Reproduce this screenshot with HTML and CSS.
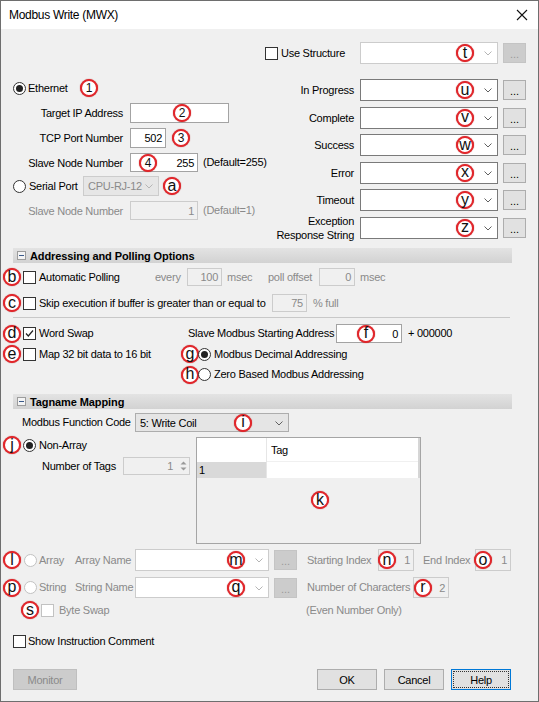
FILE: index.html
```html
<!DOCTYPE html>
<html>
<head>
<meta charset="utf-8">
<title>Modbus Write (MWX)</title>
<link rel="stylesheet" href="styles.css">
</head>
<body>
<div class="window">
  <div class="titlebar">
    <span class="title">Modbus Write (MWX)</span>
    <svg class="close" width="12" height="12" viewBox="0 0 12 12"><path d="M1 1L11 11M11 1L1 11" stroke="#111" stroke-width="1.1" fill="none"/></svg>
  </div>

  <div class="content">
    <div class="top">
      <div class="left">
        <div class="row eth">
          <span class="rd on"></span><span class="lbl w-eth">Ethernet</span><span class="badge num">1</span>
        </div>
        <div class="row h20 mt6">
          <span class="flabel">Target IP Address</span>
          <span class="tbox w99"><span class="badge num ov b-ip">2</span></span>
        </div>
        <div class="row h20 mt5">
          <span class="flabel">TCP Port Number</span>
          <span class="tbox w36">502</span><span class="badge num ml6">3</span>
        </div>
        <div class="row h19 mt5">
          <span class="flabel">Slave Node Number</span>
          <span class="tbox w68">255<span class="badge num ov b-slave">4</span></span><span class="lbl ml5">(Default=255)</span>
        </div>
        <div class="row h20 mt4">
          <span class="rd"></span><span class="lbl w-serial">Serial Port</span>
          <span class="combo dis w76"><span class="ctext">CPU-RJ-12</span><svg class="chev" width="8" height="5" viewBox="0 0 8 5"><path d="M0.5 0.5L4 4L7.5 0.5" fill="none" stroke="#b5b5b5"/></svg></span><span class="badge ml4">a</span>
        </div>
        <div class="row h19 mt5">
          <span class="flabel gray">Slave Node Number</span>
          <span class="tbox dis w68">1</span><span class="lbl gray ml5">(Default=1)</span>
        </div>
      </div>

      <div class="right">
        <div class="srow">
          <span class="slabel leftish"><span class="cb"></span><span class="lbl ml3">Use Structure</span></span>
          <span class="combo wide light"><span class="badge ov b-combo">t</span><svg class="chev" width="8" height="5" viewBox="0 0 8 5"><path d="M0.5 0.5L4 4L7.5 0.5" fill="none" stroke="#b5b5b5"/></svg></span>
          <span class="dots dis">...</span>
        </div>
        <div class="srow first">
          <span class="slabel">In Progress</span>
          <span class="combo wide"><span class="badge ov b-combo">u</span><svg class="chev" width="8" height="5" viewBox="0 0 8 5"><path d="M0.5 0.5L4 4L7.5 0.5" fill="none" stroke="#606060"/></svg></span>
          <span class="dots">...</span>
        </div>
        <div class="srow">
          <span class="slabel">Complete</span>
          <span class="combo wide"><span class="badge ov b-combo">v</span><svg class="chev" width="8" height="5" viewBox="0 0 8 5"><path d="M0.5 0.5L4 4L7.5 0.5" fill="none" stroke="#606060"/></svg></span>
          <span class="dots">...</span>
        </div>
        <div class="srow">
          <span class="slabel">Success</span>
          <span class="combo wide"><span class="badge ov b-combo">w</span><svg class="chev" width="8" height="5" viewBox="0 0 8 5"><path d="M0.5 0.5L4 4L7.5 0.5" fill="none" stroke="#606060"/></svg></span>
          <span class="dots">...</span>
        </div>
        <div class="srow">
          <span class="slabel">Error</span>
          <span class="combo wide"><span class="badge ov b-combo">x</span><svg class="chev" width="8" height="5" viewBox="0 0 8 5"><path d="M0.5 0.5L4 4L7.5 0.5" fill="none" stroke="#606060"/></svg></span>
          <span class="dots">...</span>
        </div>
        <div class="srow">
          <span class="slabel">Timeout</span>
          <span class="combo wide"><span class="badge ov b-combo">y</span><svg class="chev" width="8" height="5" viewBox="0 0 8 5"><path d="M0.5 0.5L4 4L7.5 0.5" fill="none" stroke="#606060"/></svg></span>
          <span class="dots">...</span>
        </div>
        <div class="srow">
          <span class="slabel two">Exception<br>Response String</span>
          <span class="combo wide"><span class="badge ov b-combo">z</span><svg class="chev" width="8" height="5" viewBox="0 0 8 5"><path d="M0.5 0.5L4 4L7.5 0.5" fill="none" stroke="#606060"/></svg></span>
          <span class="dots">...</span>
        </div>
      </div>
    </div>

    <div class="sect">
      <span class="minus"></span><span class="sect-title">Addressing and Polling Options</span>
    </div>
    <div class="row h18 mt5">
      <span class="badge lead">b</span><span class="cb ml2"></span><span class="lbl ml3 w-auto">Automatic Polling</span>
      <span class="lbl gray w-every">every</span><span class="tbox dis w35">100</span>
      <span class="lbl gray ml5 w-msec">msec</span><span class="lbl gray w-poll">poll offset</span><span class="tbox dis w36">0</span>
      <span class="lbl gray ml5">msec</span>
    </div>
    <div class="row h18 mt8">
      <span class="badge lead">c</span><span class="cb ml2"></span><span class="lbl ml3 w-skip">Skip execution if buffer is greater than or equal to</span>
      <span class="tbox dis w35">75</span><span class="lbl gray ml6">% full</span>
    </div>
    <div class="sep"></div>

    <div class="wsgrid">
      <div class="row">
        <span class="badge lead">d</span><span class="cb ml2"><svg width="11" height="11" viewBox="0 0 11 11"><path d="M2 5.5L4.3 8L9 2.5" fill="none" stroke="#222" stroke-width="1.2"/></svg></span><span class="lbl ml3">Word Swap</span>
      </div>
      <div class="row pl7">
        <span class="lbl w-slaveaddr">Slave Modbus Starting Address</span>
        <span class="tbox w66">0<span class="badge ov b-f">f</span></span><span class="lbl ml6">+ 000000</span>
      </div>
      <div class="row">
        <span class="badge lead">e</span><span class="cb ml2"></span><span class="lbl ml3">Map 32 bit data to 16 bit</span>
      </div>
      <div class="row">
        <span class="badge">g</span><span class="rd on mln1"></span><span class="lbl ml3">Modbus Decimal Addressing</span>
      </div>
      <div class="row"></div>
      <div class="row">
        <span class="badge">h</span><span class="rd mln1"></span><span class="lbl ml3">Zero Based Modbus Addressing</span>
      </div>
    </div>

    <div class="sect mt10">
      <span class="minus"></span><span class="sect-title">Tagname Mapping</span>
    </div>
    <div class="row h19 mt4 pl9">
      <span class="lbl w-func">Modbus Function Code</span>
      <span class="combo gcombo w154"><span class="ctext">5: Write Coil</span><span class="badge ov b-i">i</span><svg class="chev" width="8" height="5" viewBox="0 0 8 5"><path d="M0.5 0.5L4 4L7.5 0.5" fill="none" stroke="#606060"/></svg></span>
    </div>
    <div class="tagarea">
      <div class="tagleft">
        <div class="row h16">
          <span class="badge lead">j</span><span class="rd on ml2"></span><span class="lbl ml3">Non-Array</span>
        </div>
        <div class="row h18 mt4 pl29">
          <span class="lbl w-ntags">Number of Tags</span>
          <span class="spin"><span class="spin-val">1</span><span class="spin-btns"><svg width="7" height="4" viewBox="0 0 7 4"><path d="M0.5 3.5L3.5 0.5L6.5 3.5Z" fill="#9a9a9a"/></svg><svg width="7" height="4" viewBox="0 0 7 4"><path d="M0.5 0.5L3.5 3.5L6.5 0.5Z" fill="#9a9a9a"/></svg></span></span>
        </div>
      </div>
      <div class="table">
        <div class="thead"><span class="tc1"></span><span class="tc2">Tag</span><span class="tscroll"></span></div>
        <div class="trow"><span class="tc1 gray-cell">1</span><span class="tc2"></span><span class="tscroll"></span></div>
        <span class="badge tbadge">k</span>
      </div>
    </div>

    <div class="row h22 mt5">
      <span class="lead-w"><span class="badge lead">l</span><span class="rd dis ml3"></span><span class="lbl gray ml2">Array</span></span>
      <span class="lbl gray w-name">Array Name</span>
      <span class="combo light w134 ml6"><span class="badge ov b-combo">m</span><svg class="chev" width="8" height="5" viewBox="0 0 8 5"><path d="M0.5 0.5L4 4L7.5 0.5" fill="none" stroke="#b5b5b5"/></svg></span>
      <span class="dots dis h22 w22">...</span>
      <span class="lbl gray ml10 w-start">Starting Index</span>
      <span class="tbox dis w36 h20">1<span class="badge ov b-n">n</span></span>
      <span class="lbl gray ml9 w-end">End Index</span>
      <span class="tbox dis w36 h20">1<span class="badge ov b-o">o</span></span>
    </div>
    <div class="row h21 mt6">
      <span class="lead-w"><span class="badge lead">p</span><span class="rd dis ml3"></span><span class="lbl gray ml2">String</span></span>
      <span class="lbl gray w-name">String Name</span>
      <span class="combo light w134 ml6"><span class="badge ov b-combo">q</span><svg class="chev" width="8" height="5" viewBox="0 0 8 5"><path d="M0.5 0.5L4 4L7.5 0.5" fill="none" stroke="#b5b5b5"/></svg></span>
      <span class="dots dis h21 w22">...</span>
      <span class="lbl gray ml10 w-chars">Number of Characters</span>
      <span class="tbox dis w36 h20">2<span class="badge ov b-r">r</span></span>
    </div>
    <div class="row h18 mt3">
      <span class="bs-w"><span class="badge ml8">s</span><span class="cb dis ml2"></span><span class="lbl gray ml5">Byte Swap</span></span>
      <span class="lbl gray">(Even Number Only)</span>
    </div>

    <div class="row h16 mt14">
      <span class="cb"></span><span class="lbl ml2">Show Instruction Comment</span>
    </div>

    <div class="buttons">
      <span class="btn dis w64">Monitor</span>
      <span class="btn ok">OK</span>
      <span class="btn">Cancel</span>
      <span class="btn help"><span class="focus">Help</span></span>
    </div>
  </div>
</div>
</body>
</html>
```

FILE: styles.css
```css
* { box-sizing: border-box; }
html, body { margin: 0; padding: 0; }
body {
  width: 539px;
  height: 702px;
  overflow: hidden;
  font-family: "Liberation Sans", Arial, sans-serif;
  font-size: 11px;
  letter-spacing: -0.25px;
  color: #000;
  background: #fff;
}
.window {
  width: 539px;
  height: 702px;
  border: 1px solid #6e6e6e;
  background: #f0f0f0;
  display: flex;
  flex-direction: column;
}
.titlebar {
  height: 28px;
  flex: none;
  background: #fff;
  display: flex;
  align-items: center;
  padding-left: 8px;
  position: relative;
}
.title { font-size: 12px; letter-spacing: -0.3px; color: #000; }
.close { position: absolute; right: 10px; top: 8px; }

.content { padding: 0 12px; display: flex; flex-direction: column; }

.row { display: flex; align-items: center; flex: none; }
.lbl { white-space: nowrap; line-height: 13px; }
.gray { color: #8a8a8a; }

.h16 { height: 16px; } .h18 { height: 18px; } .h19 { height: 19px; }
.h20 { height: 20px; } .h21 { height: 21px; } .h22 { height: 22px; }
.mt3 { margin-top: 3px; } .mt4 { margin-top: 4px; } .mt5 { margin-top: 5px; }
.mt6 { margin-top: 6px; } .mt8 { margin-top: 8px; } .mt10 { margin-top: 10px; }
.mt14 { margin-top: 14px; }
.ml2 { margin-left: 2px; } .ml3 { margin-left: 3px; } .ml4 { margin-left: 4px; }
.ml5 { margin-left: 5px; } .ml6 { margin-left: 6px; } .ml8 { margin-left: 8px; }
.ml9 { margin-left: 9px; } .ml10 { margin-left: 10px; } .mln1 { margin-left: -1px; }
.pl7 { padding-left: 7px; } .pl9 { padding-left: 9px; } .pl29 { padding-left: 29px; }

/* controls */
.cb {
  width: 13px; height: 13px; flex: none;
  border: 1px solid #333; background: #fff;
  display: inline-flex; align-items: center; justify-content: center;
}
.cb.dis { border-color: #c2c2c2; }
.rd {
  width: 13px; height: 13px; flex: none;
  border: 1px solid #333; border-radius: 50%; background: #fff;
  display: inline-flex; align-items: center; justify-content: center;
}
.rd.on::after { content: ""; width: 7px; height: 7px; border-radius: 50%; background: #222; }
.rd.dis { border-color: #c2c2c2; }

.tbox {
  position: relative; flex: none;
  height: 100%;
  background: #fff; border: 1px solid #a3a3a3;
  display: inline-flex; align-items: center; justify-content: flex-end;
  padding-right: 3px;
}
.tbox.dis { background: #f0f0f0; border-color: #cccccc; color: #8a8a8a; }
.w35 { width: 35px; } .w36 { width: 36px; } .w66 { width: 66px; }
.w68 { width: 68px; } .w99 { width: 99px; } .w22 { width: 22px; }
.w64 { width: 64px; }

.combo {
  position: relative; flex: none;
  height: 100%;
  background: #fff; border: 1px solid #7a7a7a;
  display: inline-flex; align-items: center;
}
.combo.light { border-color: #cccccc; }
.combo.dis { background: #e6e6e6; border-color: #cccccc; color: #8a8a8a; }
.combo.gcombo { background: #e5e5e5; border-color: #adadad; }
.combo .ctext { padding-left: 4px; white-space: nowrap; }
.combo .chev { position: absolute; right: 5px; top: calc(50% - 2px); }
.w76 { width: 76px; } .w134 { width: 134px; } .w154 { width: 154px; }
.combo.wide { width: 138px; height: 22px; }

.dots {
  flex: none;
  width: 23px; height: 20px; margin-left: 5px;
  background: #e1e1e1; border: 1px solid #adadad;
  display: inline-flex; align-items: center; justify-content: center;
  padding-top: 2px; letter-spacing: 0;
}
.dots.dis { background: #cccccc; border-color: #c4c4c4; color: #9a9a9a; }

/* annotation badges */
.badge {
  width: 18px; height: 18px; flex: none;
  border: 2px solid #e3262b; border-radius: 50%;
  background: #fff;
  box-shadow: 0 0 1px #b02020;
  display: inline-flex; align-items: center; justify-content: center;
  font-family: "Liberation Sans", Arial, sans-serif;
  font-size: 16px; line-height: 1; color: #111; letter-spacing: 0;
  padding-bottom: 1px;
}
.badge.num { font-size: 12px; padding-bottom: 0; }
.badge.ov { position: absolute; top: calc(50% - 9px); }
.badge.lead { margin-left: -10px; }
.b-ip { left: 42px; }
.b-slave { left: 8px; }
.b-combo { right: 23px; }
.b-f { left: 20px; }
.b-i { left: 98px; }
.b-n { left: -1px; }
.b-o { left: -2px; }
.b-r { left: 0px; }
.badge.tbadge { position: absolute; left: 114px; top: 53px; }

/* top area */
.top { height: 219px; flex: none; display: flex; padding-top: 13px; }
.left { width: 249px; flex: none; padding-top: 37px; display: flex; flex-direction: column; }
.eth { height: 18px; }
.w-eth { width: 52px; margin-left: 2px; }
.w-serial { width: 54px; margin-left: 3px; }
.flabel { width: 110px; margin-right: 7px; text-align: right; white-space: nowrap; flex: none; }

.right { width: 264px; flex: none; display: flex; flex-direction: column; gap: 5.5px; }
.srow { display: flex; align-items: center; height: 22px; flex: none; }
.srow.first { margin-top: 9.5px; }
.slabel { width: 92px; margin-right: 6px; text-align: right; white-space: nowrap; flex: none; }
.slabel.leftish { display: flex; align-items: center; padding-left: 3px; text-align: left; }
.slabel.two { line-height: 14px; }

/* sections */
.sect {
  height: 15px; width: 499px; flex: none;
  background: linear-gradient(to bottom, #e3e3e3, #d2d2d2);
  display: flex; align-items: center;
}
.minus {
  width: 9px; height: 9px; margin-left: 4px; flex: none;
  border: 1px solid #9c9c9c; background: #f4f4f4; position: relative;
}
.minus::after {
  content: ""; position: absolute; left: 1px; right: 1px; top: 3px; height: 1px; background: #3a5a8a;
}
.sect-title { font-weight: bold; margin-left: 4px; letter-spacing: -0.1px; }

.w-auto { width: 116px; }
.w-every { width: 32px; }
.w-msec { width: 41px; }
.w-poll { width: 51px; }
.w-skip { width: 233px; }

.sep { height: 1px; width: 497px; background: #c8c8c8; margin-top: 5px; flex: none; }

.wsgrid {
  display: grid;
  grid-template-columns: 168px 1fr;
  grid-template-rows: 19px 18px 19px;
  row-gap: 2px;
  margin-top: 6px;
}
.w-slaveaddr { width: 148px; }

.w-func { width: 113px; }

.tagarea { display: flex; margin-top: 5px; flex: none; }
.tagleft { width: 183px; flex: none; display: flex; flex-direction: column; }
.w-ntags { width: 81px; }
.spin {
  width: 67px; height: 18px; flex: none;
  border: 1px solid #cccccc; background: #f0f0f0; color: #8a8a8a;
  display: flex; align-items: center;
}
.spin-val { flex: 1; text-align: right; padding-right: 4px; }
.spin-btns { width: 12px; height: 100%; display: flex; flex-direction: column; justify-content: center; align-items: center; gap: 2px; }

.table {
  position: relative;
  width: 225px; height: 107px; flex: none;
  border: 1px solid #a5a5a5; background: #f0f0f0;
}
.thead, .trow { display: flex; }
.thead { height: 24px; background: #fff; }
.trow { height: 16px; }
.tc1 { width: 70px; flex: none; border-right: 1px solid #e6e6e6; display: flex; align-items: center; padding-left: 2px; }
.tc2 { width: 151px; flex: none; background: #fff; display: flex; align-items: center; padding-left: 4px; }
.thead .tc2 { border-bottom: 1px solid #f0f0f0; }
.tscroll { width: 2px; flex: none; background: #d6d6d6; }
.gray-cell { background: #d9d9d9; }

.lead-w { width: 62px; flex: none; display: flex; align-items: center; height: 100%; }
.w-name { width: 54px; text-align: right; }
.w-start { width: 71px; }
.w-end { width: 52px; }
.w-chars { width: 106px; }
.bs-w { width: 293px; flex: none; display: flex; align-items: center; }

.buttons { display: flex; margin-top: 20px; height: 21px; flex: none; }
.btn {
  width: 60px; height: 21px; flex: none;
  background: #e1e1e1; border: 1px solid #adadad;
  display: inline-flex; align-items: center; justify-content: center;
  margin-left: 7px;
}
.btn.dis { width: 64px; margin-left: 0; background: #cccccc; border-color: #bfbfbf; color: #8a8a8a; }
.btn.ok { margin-left: 240px; }
.btn.help { border: 1px solid #0078d7; padding: 1px; }
.btn.help .focus { width: 100%; height: 100%; border: 1px dotted #333; display: flex; align-items: center; justify-content: center; }
```
